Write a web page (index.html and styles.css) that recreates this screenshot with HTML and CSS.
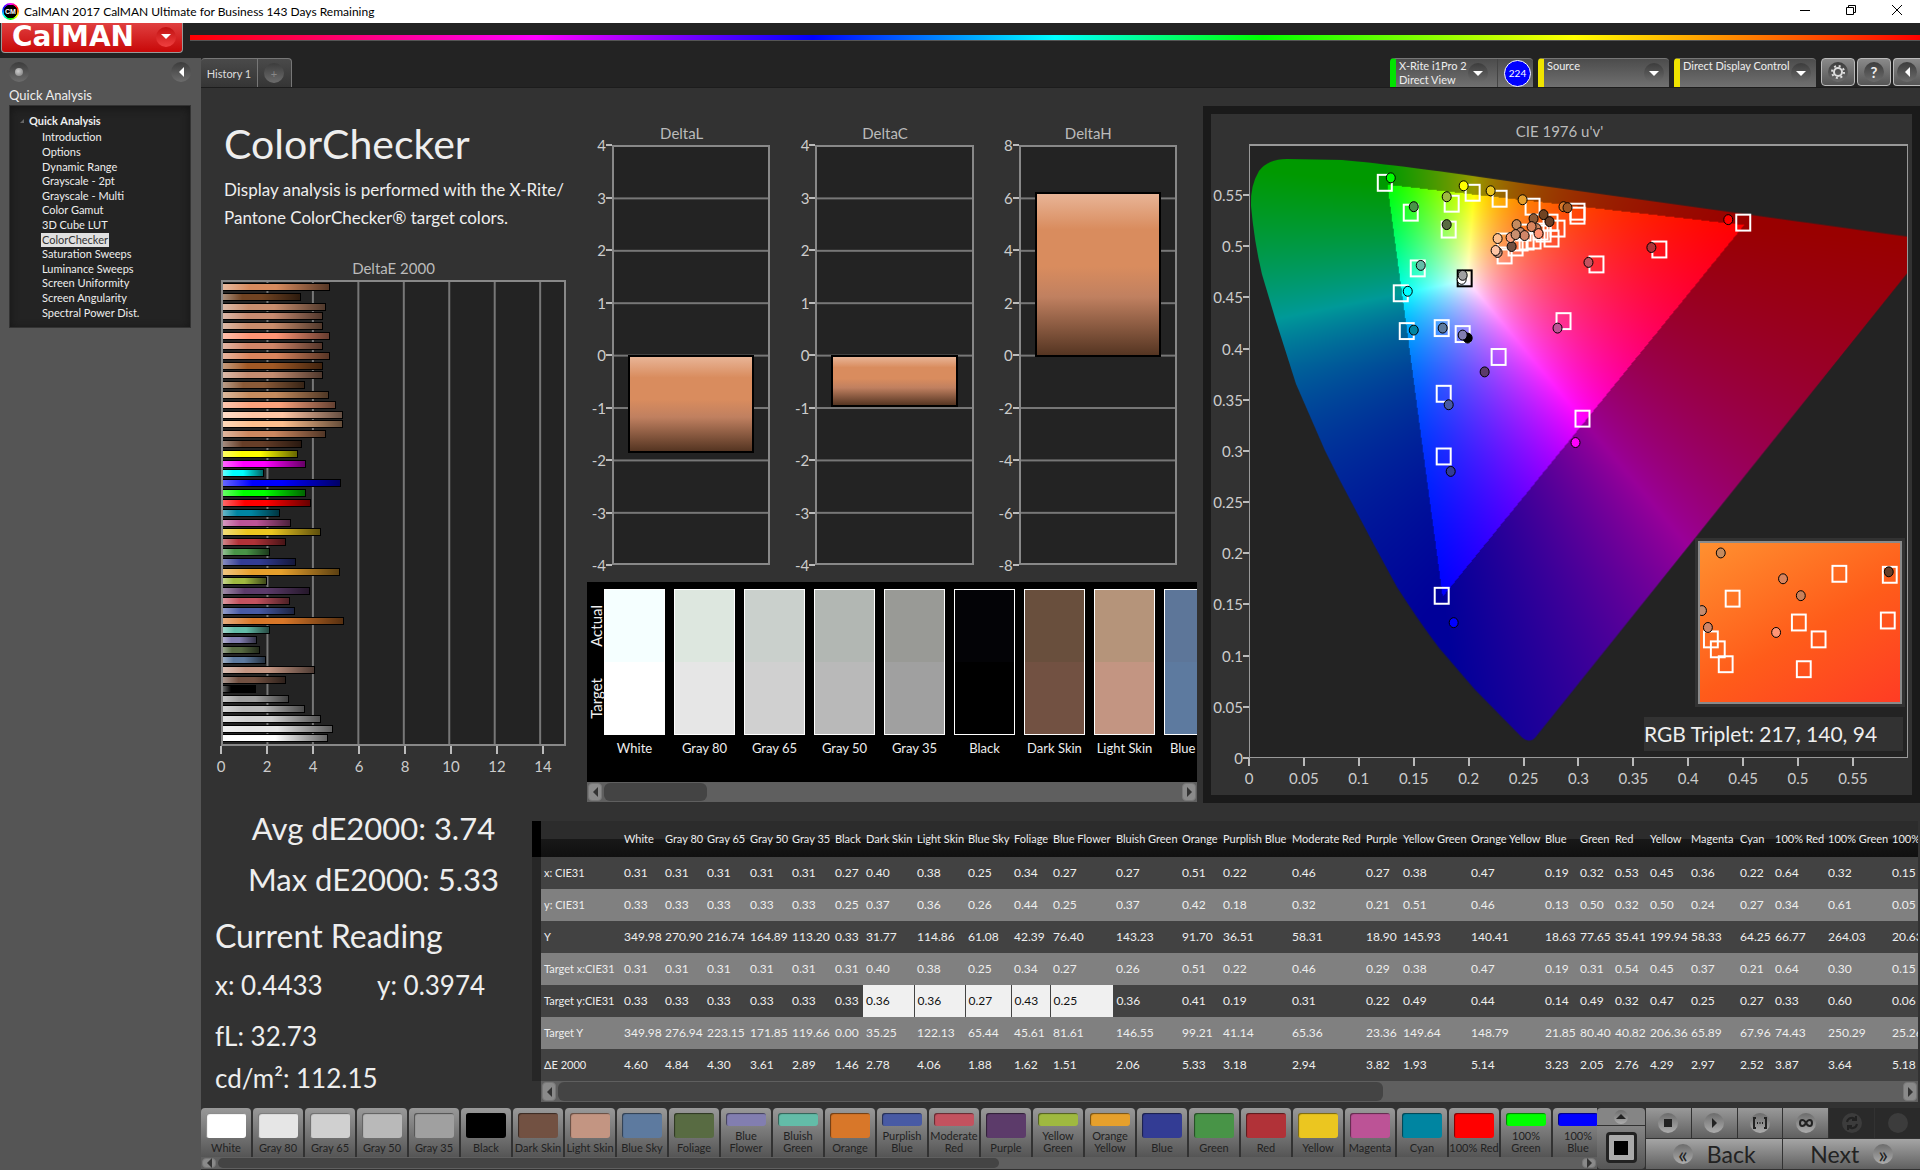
FILE: index.html
```html
<!DOCTYPE html>
<html lang="en">
<head>
  <meta charset="UTF-8">
  <meta name="viewport" content="width=device-width, initial-scale=1">
  <title>CalMAN 2017 CalMAN Ultimate for Business</title>
  <link rel="stylesheet" href="styles.css">
</head>
<body>

  <header class="titlebar">
    <span class="app-icon">CM</span>
    <span class="app-title">CalMAN 2017 CalMAN Ultimate for Business 143 Days Remaining</span>
    <div class="window-buttons">
      <button aria-label="Minimize"><svg width="12" height="12"><path d="M1 6.500h10" /></svg></button>
      <button aria-label="Restore"><svg width="12" height="12"><path d="M1.500 3.500h7v7h-7zM3.500 3.500v-2h7v7h-2" /></svg></button>
      <button aria-label="Close"><svg width="12" height="12"><path d="M1 1l10 10M11 1L1 11" /></svg></button>
    </div>
  </header>

  <div class="brand-row">
    <button class="logo">CalMAN <span class="round red"><i class="tri down"></i></span></button>
    <div class="spectrum"></div>
  </div>

  <div class="app">
    <aside class="sidebar">
      <div class="side-tools">
        <span class="round"><i class="dot"></i></span>
        <button class="round" aria-label="Collapse"><i class="tri left"></i></button>
      </div>
      <h2>Quick Analysis</h2>
      <nav class="tree">
        <h3>Quick Analysis</h3>
        <ul>
          <li><a href="#">Introduction</a></li>
          <li><a href="#">Options</a></li>
          <li><a href="#">Dynamic Range</a></li>
          <li><a href="#">Grayscale - 2pt</a></li>
          <li><a href="#">Grayscale - Multi</a></li>
          <li><a href="#">Color Gamut</a></li>
          <li><a href="#">3D Cube LUT</a></li>
          <li><a href="#" class="active">ColorChecker</a></li>
          <li><a href="#">Saturation Sweeps</a></li>
          <li><a href="#">Luminance Sweeps</a></li>
          <li><a href="#">Screen Uniformity</a></li>
          <li><a href="#">Screen Angularity</a></li>
          <li><a href="#">Spectral Power Dist.</a></li>
        </ul>
      </nav>
    </aside>

    <main>
      <div class="tabs">
        <button class="tab">History 1</button>
        <button class="tab add" aria-label="Add history"><span class="round">+</span></button>
        <div class="devices">
          <div class="device meter">
            <button class="device-main"><span>X-Rite i1Pro 2<br>Direct View</span><span class="round"><i class="tri down"></i></span></button>
            <span class="badge">224</span>
          </div>
          <div class="device source">
            <button class="device-main"><span>Source</span><span class="round"><i class="tri down"></i></span></button>
          </div>
          <div class="device display">
            <button class="device-main"><span>Direct Display Control</span><span class="round"><i class="tri down"></i></span></button>
          </div>
          <button class="tool" aria-label="Settings"><span class="round">
            <svg width="16" height="16" viewBox="0 0 16 16"><circle cx="8" cy="8" r="4" fill="none" stroke="#ddd" stroke-width="2" /><circle cx="8" cy="8" r="6" fill="none" stroke="#ddd" stroke-width="2" stroke-dasharray="2 2.710" /></svg>
          </span></button>
          <button class="tool" aria-label="Help"><span class="round">?</span></button>
          <button class="tool last" aria-label="Collapse"><span class="round"><i class="tri left"></i></span></button>
        </div>
      </div>

      <div class="upper">
        <section class="intro">
          <h1>ColorChecker</h1>
          <p>Display analysis is performed with the X-Rite/<br>Pantone ColorChecker® target colors.</p>
          <h4>DeltaE 2000</h4>
          <div class="de-plot" id="de-plot"></div>
          <ul class="x-axis de-axis" id="de-axis"></ul>
        </section>

        <section class="middle">
          <div class="deltas" id="deltas"></div>
          <div class="strip">
            <div class="strip-side"><span>Actual</span><span>Target</span></div>
            <div class="strip-list" id="strip"></div>
          </div>
          <div class="scroll strip-scroll"><button aria-label="Scroll left"><i class="tri left"></i></button><div class="thumb"></div><button aria-label="Scroll right"><i class="tri right"></i></button></div>
        </section>

        <section class="cie">
          <h4>CIE 1976 u'v'</h4>
          <div class="cie-grid">
            <ul class="y-axis" id="cie-y"></ul>
            <div class="cie-plot">
              <canvas id="gamut" width="658" height="614"></canvas>
              <svg id="cie-marks" class="marks" viewBox="0 0 658 614" preserveAspectRatio="none"></svg>
              <div class="inset"><svg id="inset-marks" class="marks" viewBox="0 0 202 160" preserveAspectRatio="none"></svg></div>
              <div class="triplet">RGB Triplet: 217, 140, 94</div>
            </div>
            <ul class="x-axis" id="cie-x"></ul>
          </div>
        </section>
      </div>

      <div class="lower">
        <section class="readings">
          <div class="summary">Avg dE2000: 3.74</div>
          <div class="summary">Max dE2000: 5.33</div>
          <div class="current">Current Reading</div>
          <div class="xy"><span>x: 0.4433</span><span>y: 0.3974</span></div>
          <div class="fl">fL: 32.73</div>
          <div class="cd">cd/m²: 112.15</div>
        </section>
        <section class="data">
          <div class="table-wrap"><table id="data-table"></table></div>
          <div class="scroll data-scroll"><button aria-label="Scroll left"><i class="tri left"></i></button><div class="thumb"></div><button aria-label="Scroll right"><i class="tri right"></i></button></div>
        </section>
      </div>

      <footer>
        <div class="patches">
          <div class="patch-list" id="patches"></div>
          <div class="scroll patch-scroll"><button aria-label="Scroll left"><i class="tri left"></i></button><div class="thumb"></div><button aria-label="Scroll right"><i class="tri right"></i></button></div>
        </div>
        <div class="window-pick">
          <button class="pick-up" aria-label="Expand"><span class="round light"><i class="tri up"></i></span></button>
          <button class="pick-size" aria-label="Window size"><span></span></button>
        </div>
        <div class="transport">
          <button aria-label="Stop"><span class="round light"><i class="stop"></i></span></button>
          <button aria-label="Play"><span class="round light"><i class="tri right"></i></span></button>
          <button aria-label="Read series"><span class="round light"><svg width="16" height="14"><path d="M4 2H2v10h2M12 2h2v10h-2M5 7h1M7.500 7h1M10 7h1" /></svg></span></button>
          <button aria-label="Read continuous"><span class="round light"><svg width="16" height="10"><path d="M8 5C6 1 2 1 2 5s4 4 6 0 6-4 6 0-4 4-6 0" /></svg></span></button>
          <button class="off" aria-label="Repeat"><span class="round"><svg width="16" height="16"><path d="M3 7a5 5 0 0 1 9-2M13 9a5 5 0 0 1-9 2M12 1v4H8M4 15v-4h4" /></svg></span></button>
          <button class="off" aria-label="Record"><span class="round"></span></button>
          <button class="step"><span class="round light">«</span>Back</button>
          <button class="step">Next<span class="round light">»</span></button>
        </div>
      </footer>
    </main>
  </div>

  <script src="script.js"></script>
</body>
</html>
```
FILE: styles.css
```css
* {
  box-sizing: border-box;
}

body {
  margin: 0;
  min-height: 100vh;
  display: flex;
  flex-direction: column;
  background: #232323;
  color: #eee;
  font-family: Lato, 'Open Sans', sans-serif;
  font-size: 14px;
  overflow-x: hidden;
}

h1, h2, h3, h4, p, ul {
  margin: 0;
  padding: 0;
  font-weight: normal;
}

ul {
  list-style: none;
}

button {
  font: inherit;
  color: inherit;
  border: 0;
  padding: 0;
  margin: 0;
  background: none;
  cursor: pointer;
}

/* small shared bits */
.round {
  width: 20px;
  height: 20px;
  border-radius: 50%;
  display: flex;
  align-items: center;
  justify-content: center;
  flex: none;
  background: linear-gradient(#3c3c3c, #6c6c6c);
}

.round.light {
  background: linear-gradient(#6c6c6c, #adadad);
}

.round.red {
  background: linear-gradient(#c01010, #f04040);
}

.tri {
  border: 5px solid transparent;
  flex: none;
}

.tri.down {
  border-top-color: #fff;
  border-bottom-width: 0;
}

.tri.up {
  border-bottom-color: #222;
  border-top-width: 0;
}

.tri.left {
  border-right-color: #fff;
  border-left-width: 0;
}

.tri.right {
  border-left-color: #222;
  border-right-width: 0;
}

.dot {
  width: 8px;
  height: 8px;
  border-radius: 50%;
  background: radial-gradient(circle at 40% 40%, #ccc, #777);
}

/* title bar */
.titlebar {
  display: flex;
  align-items: center;
  height: 23px;
  background: #fff;
  color: #000;
  font: 12px Lato, 'Open Sans', sans-serif;
}

.app-icon {
  width: 17px;
  height: 17px;
  margin: 0 5px 0 2px;
  border-radius: 50%;
  background: radial-gradient(#000 55%, transparent 58%), conic-gradient(#f0f, #f00, #ff0, #0f0, #0ff, #00f, #f0f);
  color: #fff;
  font: bold 7px/17px 'Liberation Sans', sans-serif;
  text-align: center;
}

.window-buttons {
  margin-left: auto;
  display: flex;
}

.window-buttons button {
  width: 46px;
  height: 20px;
}

.window-buttons svg {
  fill: none;
  stroke: #000;
}

.brand-row {
  display: flex;
  height: 35px;
}

.logo {
  width: 182px;
  height: 30px;
  margin: 0 7px 0 1px;
  display: flex;
  align-items: center;
  justify-content: space-between;
  padding: 0 6px 2px 10px;
  border: 1px solid #999;
  border-top: 0;
  border-radius: 0 0 4px 4px;
  background: linear-gradient(#e04040, #c80808);
  color: #fff;
  font: bold 28px/28px 'DejaVu Sans', sans-serif;
}

.spectrum {
  flex: 1;
  height: 6px;
  margin-top: 12px;
  border-bottom: 1px solid #555;
  background: linear-gradient(90deg, #f00, #f0f 20%, #00f 36%, #0ff 50%, #0f0 62%, #ff0 80%, #f00);
}

.app {
  flex: 1;
  display: flex;
}

/* sidebar */
.sidebar {
  width: 201px;
  flex: none;
  padding: 4px 10px 0 9px;
  background: #555;
}

.side-tools {
  display: flex;
  justify-content: space-between;
}

.sidebar h2 {
  font-size: 13px;
  line-height: 20px;
  margin: 3px 0 0;
}

.tree {
  padding: 8px 0 7px;
  border: 1px solid #333;
  background: #232323;
  box-shadow: inset 0 2px 8px #151515;
  font-size: 11px;
}

.tree h3 {
  font-size: 11px;
  font-weight: bold;
  line-height: 14px;
  padding-left: 19px;
  margin-bottom: 2px;
}

.tree h3::before {
  content: '';
  float: left;
  margin: 5px 0 0 -9px;
  border: 2px solid;
  border-color: transparent #666 #666 transparent;
}

.tree ul {
  display: grid;
  grid-auto-rows: 1fr;
  height: 190px;
  padding-left: 31px;
}

.tree li {
  display: flex;
  align-items: center;
}

.tree a {
  color: #eee;
  text-decoration: none;
  line-height: 14px;
  padding: 0 1px;
}

.tree a.active {
  background: #e0e0e0;
  color: #333;
}

/* tabs and devices */
main {
  flex: 1;
  min-width: 0;
  display: flex;
  flex-direction: column;
  background: #323232;
}

.tabs {
  display: flex;
  height: 30px;
  background: #232323;
  border-bottom: 1px solid #1c1c1c;
}

.tab {
  width: 57px;
  border: 1px solid #777;
  border-width: 1px 1px 0 0;
  border-top-left-radius: 4px;
  background: linear-gradient(#4a4a4a, #353535);
  color: #ddd;
  font-size: 11px;
}

.tab.add {
  width: 34px;
  border-radius: 0 4px 0 0;
  padding-left: 6px;
  color: #888;
}

.devices {
  margin-left: auto;
  display: flex;
  gap: 5px;
}

.device {
  display: flex;
  border-left: 6px solid #f0e400;
  border-top: 1px solid #777;
  border-radius: 4px 4px 0 0;
  background: linear-gradient(#4c4c4c, #707070);
  font-size: 11px;
}

.device.meter {
  border-left-color: #00e400;
  width: 143px;
}

.device.source {
  width: 131px;
}

.device.display {
  width: 142px;
}

.device-main {
  flex: 1;
  display: flex;
  justify-content: space-between;
  padding: 0 5px 0 3px;
  text-align: left;
  line-height: 14px;
  white-space: nowrap;
}

.device-main .round {
  margin-top: 4px;
}

.meter .device-main {
  padding-right: 9px;
  border-right: 1px solid #444;
}

.badge {
  width: 27px;
  height: 27px;
  margin: 1px 2px 0 6px;
  border: 1px solid #fff;
  border-radius: 50%;
  background: #00f;
  color: #fff;
  font-size: 10px;
  line-height: 25px;
  text-align: center;
}

.tool {
  width: 34px;
  height: 28px;
  display: flex;
  align-items: center;
  justify-content: center;
  border: 1px solid #bbb;
  border-radius: 4px;
  background: linear-gradient(#8a8a8a, #555);
  margin-right: -3px;
  font-weight: bold;
  font-size: 15px;
}

.tool.last {
  width: 27px;
  border-right: 0;
  border-radius: 4px 0 0 4px;
  margin-right: 0;
}

/* charts */
.upper {
  display: grid;
  grid-template-columns: minmax(0, 379fr) minmax(0, 623fr) minmax(0, 717fr);
}

.upper h4 {
  color: #bbb;
  font-size: 15px;
  line-height: 20px;
  text-align: center;
}

.x-axis, .y-axis {
  display: flex;
  justify-content: space-between;
  color: #ccc;
  font-size: 15px;
}

.x-axis li {
  width: 0;
  display: flex;
  flex-direction: column;
  align-items: center;
}

.x-axis li::before {
  content: '';
  width: 2px;
  height: 8px;
  flex: none;
  background: #bbb;
  margin-bottom: 3px;
}

.y-axis {
  flex-direction: column;
  align-items: flex-end;
}

.y-axis li {
  height: 0;
  display: flex;
  align-items: center;
}

.y-axis li::after {
  content: '';
  width: 6px;
  height: 2px;
  background: #bbb;
}

.y-axis li.blank::after, .x-axis li.blank::before {
  background: none;
}

.intro {
  padding: 24px 14px 0 20px;
}

.intro h1 {
  font-size: 41px;
  line-height: 64px;
  padding-left: 3px;
}

.intro p {
  font-size: 17px;
  line-height: 28px;
  padding-left: 3px;
  margin-bottom: 26px;
  white-space: nowrap;
}

.intro h4 {
  margin-bottom: 2px;
}

.de-plot {
  height: 466px;
  display: flex;
  flex-direction: column;
  padding-top: 1px;
  border: 2px solid #888;
  background: linear-gradient(90deg, #777 2px, transparent 2px) -2px 0 / 13.333% 100% #232323;
}

.de-row {
  flex: 1;
}

.de-bar {
  height: 8px;
  border: 1px solid #000;
  border-left: 0;
  background-image: linear-gradient(90deg, rgba(255, 255, 255, 0.4), rgba(255, 255, 255, 0) 25%, rgba(0, 0, 0, 0) 50%, rgba(0, 0, 0, 0.6));
}

.de-axis {
  margin-right: -23px;
}

.de-axis li.blank {
  visibility: hidden;
}

.middle {
  padding: 35px 6px 0 7px;
}

.deltas {
  display: grid;
  grid-template-columns: repeat(3, 1fr);
  gap: 20px;
  padding: 0 20px 17px 0;
}

.delta {
  display: grid;
  grid-template-columns: 25px 1fr;
}

.delta h4 {
  grid-column: 1 / 3;
  margin: 0 0 2px 6px;
}

.delta-plot {
  height: 420px;
  border: 2px solid #888;
  background: linear-gradient(#777 2px, transparent 2px) 0 -2px / 100% 12.600% #232323;
  padding: 0 14px;
}

.delta-bar {
  border: 2px solid #000;
  background: linear-gradient(#e8b496, #d98c5e 22%, #d98c5e 45%, #c08060 64%, #553522);
}

.strip {
  display: flex;
  height: 200px;
  padding-top: 7px;
  background: #000;
  overflow: hidden;
}

.strip-side {
  width: 17px;
  height: 146px;
  flex: none;
  display: flex;
  flex-direction: column;
  justify-content: space-around;
  align-items: center;
}

.strip-side span {
  writing-mode: vertical-rl;
  rotate: 180deg;
  font-size: 15px;
}

.strip-list {
  display: flex;
  gap: 9px;
  overflow: hidden;
}

.swatch {
  width: 61px;
  flex: none;
  font-size: 13px;
  text-align: center;
  white-space: nowrap;
}

.swatch-box {
  height: 146px;
  margin-bottom: 5px;
  border: 1px solid #fff;
}

.swatch-box div {
  height: 50%;
}

/* scroll bars */
.scroll {
  display: flex;
  align-items: stretch;
  padding: 1px;
  gap: 2px;
  background: #5f5f5f;
}

.scroll button {
  width: 14px;
  display: flex;
  align-items: center;
  justify-content: center;
  border: 1px solid #777;
  border-radius: 4px;
  background: #8a8a8a;
}

.scroll .tri.left {
  border-right-color: #333;
}

.scroll .tri.right {
  border-left-color: #333;
}

.scroll button:last-child {
  margin-left: auto;
}

.thumb {
  border-radius: 6px;
  background: #444;
}

.strip-scroll {
  height: 20px;
}

.strip-scroll .thumb {
  width: 17%;
}

.data-scroll {
  height: 21px;
}

.data-scroll .thumb {
  width: 60%;
}

.patch-scroll {
  height: 12px;
}

.patch-scroll .thumb {
  width: 56%;
}

/* CIE diagram */
.cie {
  margin-top: 18px;
  height: 697px;
  border: 8px solid #1a1a1a;
  padding: 7px 4px 0 0;
}

.cie h4 {
  margin-bottom: 3px;
}

.cie-grid {
  display: grid;
  grid-template-columns: 38px 1fr;
}

.cie-grid .x-axis {
  grid-column: 2;
}

.cie-plot {
  position: relative;
  height: 614px;
  border: 1px solid #999;
  border-top-width: 2px;
  background: #232323;
}

.cie-plot canvas, .marks {
  position: absolute;
  inset: 0;
  width: 100%;
  height: 100%;
}

.marks rect {
  fill: none;
  stroke: #fff;
  stroke-width: 2;
}

.marks rect.white-point {
  stroke: #000;
}

.marks ellipse {
  stroke: #000;
}

.inset {
  position: absolute;
  right: 5px;
  bottom: 53px;
  width: 31%;
  height: 163px;
  border: 2px solid #8a8a8a;
  outline: 3px solid #323232;
  background: linear-gradient(150deg, #ff9030, #ff5c1a 55%, #ff3c24);
}

.triplet {
  position: absolute;
  right: 4px;
  bottom: 6px;
  width: 259px;
  background: #323232;
  font-size: 21px;
  line-height: 34px;
  white-space: nowrap;
}

/* readings and table */
.lower {
  flex: 1;
  display: grid;
  grid-template-columns: 331px minmax(0, 1fr);
}

.readings {
  padding-left: 14px;
}

.summary {
  font-size: 31px;
  line-height: 51px;
  text-align: center;
}

.current {
  font-size: 32px;
  line-height: 62px;
}

.xy {
  display: grid;
  grid-template-columns: 162px 1fr;
  font-size: 26px;
  line-height: 36px;
  padding-bottom: 12px;
}

.fl, .cd {
  font-size: 26px;
  line-height: 42px;
}

.data {
  margin: 18px 2px 0 0;
}

.table-wrap {
  overflow: hidden;
  padding-left: 9px;
  background: linear-gradient(#000 36px, #262626 36px);
}

table {
  table-layout: fixed;
  width: 0;
  border-collapse: collapse;
  font-size: 12px;
  line-height: 16px;
}

th, td {
  height: 32px;
  padding: 0 0 0 3px;
  text-align: left;
  font-weight: normal;
  white-space: nowrap;
}

th {
  font-size: 11px;
}

thead th {
  height: 36px;
  background: linear-gradient(#2c2c2c 50%, #181818 50%, #101010);
}

tbody tr {
  background: #424242;
}

tbody tr:nth-child(even) {
  background: #808080;
}

td.edit {
  background: #f0f0f0;
  color: #111;
  border-right: 1px solid #444;
}

.data-scroll {
  margin-left: 9px;
}

/* footer */
footer {
  display: flex;
  height: 62px;
  padding-bottom: 1px;
}

.patches {
  flex: 1;
  min-width: 0;
}

.patch-list {
  display: flex;
  gap: 2px;
  overflow: hidden;
  height: 49px;
}

.patch {
  width: 50px;
  flex: none;
  display: flex;
  flex-direction: column;
  align-items: center;
  justify-content: space-between;
  padding: 5px 0 3px;
  border-radius: 4px 4px 0 0;
  background: linear-gradient(#999, #555);
  color: #222;
  font-size: 11px;
  line-height: 12px;
  white-space: pre;
}

.patch i {
  width: 40px;
  flex: 1;
  margin-bottom: 4px;
  border-radius: 3px;
  box-shadow: inset 1px 1px 1px rgba(0, 0, 0, 0.5);
}

.window-pick {
  width: 49px;
  display: flex;
  flex-direction: column;
  gap: 1px;
  padding-right: 1px;
}

.pick-up, .pick-size {
  display: flex;
  align-items: center;
  justify-content: center;
  border-radius: 4px 4px 0 0;
  background: #858585;
}

.pick-up {
  height: 17px;
}

.pick-up .round {
  width: 14px;
  height: 14px;
}

.pick-size {
  flex: 1;
  border-radius: 0 0 4px 4px;
  background: linear-gradient(#858585, #555);
}

.pick-size span {
  width: 31px;
  height: 31px;
  border: 3px solid #222;
  border-radius: 4px;
  background: linear-gradient(#000, #000) center / 14px 14px no-repeat #aaa;
}

.transport {
  width: 274px;
  display: grid;
  grid-template-columns: repeat(6, 1fr);
  grid-template-rows: 30px 30px;
  gap: 1px;
}

.transport button {
  display: flex;
  align-items: center;
  justify-content: center;
  background: linear-gradient(#999, #606060);
  color: #222;
}

.transport button.off {
  background: #2a2a2a;
}

.transport .off .round {
  background: #3c3c3c;
}

.transport svg {
  fill: none;
  stroke: #222;
  stroke-width: 2;
}

.transport .step {
  grid-column: span 3;
  gap: 14px;
  font-size: 23px;
  background: linear-gradient(#a5a5a5, #606060);
}

.stop {
  width: 8px;
  height: 8px;
  background: #222;
}
```
FILE: script.js
```js
const colors = ["White", "Gray 80", "Gray 65", "Gray 50", "Gray 35", "Black", "Dark Skin", "Light Skin", "Blue Sky",
  "Foliage", "Blue Flower", "Bluish Green", "Orange", "Purplish Blue", "Moderate Red", "Purple", "Yellow Green",
  "Orange Yellow", "Blue", "Green", "Red", "Yellow", "Magenta", "Cyan", "100% Red", "100% Green", "100% Blue"];

const targets = ["#ffffff", "#e6e6e6", "#d0d0d0", "#b9b9b9", "#a0a0a0", "#000000", "#725142", "#c39582", "#5d7a9f",
  "#586b42", "#827eb0", "#63bca8", "#d87729", "#485aa4", "#c3525f", "#5c3b6a", "#9fb940", "#e6a02c", "#333c94",
  "#489447", "#b13238", "#ebc620", "#bc5396", "#0085a1", "#ff0000", "#00ff00", "#0000ff"];

const actuals = ["#f5ffff", "#dde7df", "#cad0cc", "#b2b7b3", "#999a96", "#030306", "#694f3d", "#b5947a", "#5d7699"];

const colWidths = [80, 41, 42, 43, 42, 43, 31, 51, 51, 46, 39, 63, 66, 41, 69, 74, 37, 68, 74, 35, 35, 35, 41, 49, 35, 53, 64, 65];

const rows = {
  "x: CIE31": "0.31 0.31 0.31 0.31 0.31 0.27 0.40 0.38 0.25 0.34 0.27 0.27 0.51 0.22 0.46 0.27 0.38 0.47 0.19 0.32 0.53 0.45 0.36 0.22 0.64 0.32 0.15",
  "y: CIE31": "0.33 0.33 0.33 0.33 0.33 0.25 0.37 0.36 0.26 0.44 0.25 0.37 0.42 0.18 0.32 0.21 0.51 0.46 0.13 0.50 0.32 0.50 0.24 0.27 0.34 0.61 0.05",
  "Y": "349.98 270.90 216.74 164.89 113.20 0.33 31.77 114.86 61.08 42.39 76.40 143.23 91.70 36.51 58.31 18.90 145.93 140.41 18.63 77.65 35.41 199.94 58.33 64.25 66.77 264.03 20.63",
  "Target x:CIE31": "0.31 0.31 0.31 0.31 0.31 0.31 0.40 0.38 0.25 0.34 0.27 0.26 0.51 0.22 0.46 0.29 0.38 0.47 0.19 0.31 0.54 0.45 0.37 0.21 0.64 0.30 0.15",
  "Target y:CIE31": "0.33 0.33 0.33 0.33 0.33 0.33 0.36 0.36 0.27 0.43 0.25 0.36 0.41 0.19 0.31 0.22 0.49 0.44 0.14 0.49 0.32 0.47 0.25 0.27 0.33 0.60 0.06",
  "Target Y": "349.98 276.94 223.15 171.85 119.66 0.00 35.25 122.13 65.44 45.61 81.61 146.55 99.21 41.14 65.36 23.36 149.64 148.79 21.85 80.40 40.82 206.36 65.89 67.96 74.43 250.29 25.26",
  "ΔE 2000": "4.60 4.84 4.30 3.61 2.89 1.46 2.78 4.06 1.88 1.62 1.51 2.06 5.33 3.18 2.94 3.82 1.93 5.14 3.23 2.05 2.76 4.29 2.97 2.52 3.87 3.64 5.18"
};

// skin tones and 100% cyan / magenta / yellow, top of the DeltaE chart
const extraBars = [
  [4.71, "#d88b5e"], [3.45, "#704322"], [4.54, "#c98e6e"], [4.41, "#c78a70"], [4.41, "#c98c6c"], [4.71, "#ff9575"],
  [4.41, "#d08568"], [4.71, "#d9845d"], [4.41, "#a05825"], [4.41, "#c48c70"], [3.62, "#8a5a38"], [4.67, "#c58b5e"],
  [4.97, "#fba27c"], [5.28, "#ffc6a5"], [5.28, "#fec08e"], [4.54, "#cc8860"], [3.49, "#663e28"], [3.32, "#ffff00"],
  [3.67, "#ff00ff"], [1.8, "#00ffff"]
];

function el(id) {
  return document.getElementById(id);
}

// DeltaE 2000 bars
const de = rows["ΔE 2000"].split(" ");
const bars = extraBars.concat(colors.map((c, i) => [de[i], targets[i]]).reverse());
el("de-plot").innerHTML = bars.map(b =>
  `<div class="de-row"><div class="de-bar" style="width:${b[0] / 15 * 100}%;background-color:${b[1]}"></div></div>`).join("");
el("de-axis").innerHTML = [0, 2, 4, 6, 8, 10, 12, 14, 16].map(n => `<li class="${n > 14 ? "blank" : ""}">${n}</li>`).join("");

// DeltaL / DeltaC / DeltaH
const deltas = [["DeltaL", 4, -1.85], ["DeltaC", 4, -0.97], ["DeltaH", 8, 6.28]];
el("deltas").innerHTML = deltas.map(([name, max, value]) => {
  let labels = "";
  for (let i = 4; i >= -4; i--) labels += `<li>${i * max / 4}</li>`;
  const top = value > 0 ? (1 - value / max) * 208 : 208;
  const height = Math.abs(value) / max * 208 + 2;
  return `<div class="delta"><h4>${name}</h4><ul class="y-axis">${labels}</ul>
    <div class="delta-plot"><div style="height:${Math.round(top)}px"></div><div class="delta-bar" style="height:${Math.round(height)}px"></div></div></div>`;
}).join("");

// actual / target strip
el("strip").innerHTML = actuals.map((a, i) =>
  `<div class="swatch"><div class="swatch-box"><div style="background:${a}"></div><div style="background:${targets[i]}"></div></div>${colors[i]}</div>`).join("");

// CIE axes
let yLabels = "", xLabels = "";
for (let i = 12; i >= 0; i--) yLabels += i === 12 ? `<li class="blank"></li>` : `<li>${i * 5 / 100}</li>`;
for (let i = 0; i <= 12; i++) xLabels += i === 12 ? `<li class="blank"></li>` : `<li>${i * 5 / 100}</li>`;
el("cie-y").innerHTML = yLabels;
el("cie-x").innerHTML = xLabels;

// gamut fill, dimmed outside Rec.709
const canvas = el("gamut");
const ctx = canvas.getContext("2d");
const W = canvas.width, H = canvas.height;
const img = ctx.createImageData(W, H);
for (let py = 0; py < H; py++) {
  for (let px = 0; px < W; px++) {
    const u = px / W * 0.6, v = (H - py) / H * 0.6;
    const d = 6 * u - 16 * v + 12;
    const x = 9 * u / d, y = 4 * v / d, z = 1 - x - y;
    let rgb = [
      3.2406 * x - 1.5372 * y - 0.4986 * z,
      -0.9689 * x + 1.8758 * y + 0.0415 * z,
      0.0557 * x - 0.204 * y + 1.057 * z
    ];
    const dim = Math.min(...rgb) < 0 ? 0.6 : 1;
    const max = Math.max(...rgb);
    rgb = rgb.map(c => Math.max(c, 0) / max * 255 * dim);
    img.data.set([rgb[0], rgb[1], rgb[2], 255], (py * W + px) * 4);
  }
}
ctx.putImageData(img, 0, 0);
ctx.globalCompositeOperation = "destination-in";
ctx.fill(new Path2D("M37 13 L92 14 Q150 19 271 37 L658 91 V128 L286 594 Q280 601 272 594 L225 546 L189 504 Q168 476 147 443 L120 393 L90 336 L75 306 L46 239 L26 176 L12 129 Q4 95 1 60 Q0 40 9 25 Q18 13 37 13Z"));

// targets are squares, measurements are dots
function marks(rects, dots) {
  return rects.map(([x, y, c]) => `<rect x="${x - 7}" y="${y - 8}" width="14" height="16" class="${c || ""}"/>`).join("") +
    dots.map(([x, y, c]) => `<ellipse cx="${x}" cy="${y}" rx="4.500" ry="5" fill="${c}"/>`).join("");
}

el("cie-marks").innerHTML = marks(
  [[135, 37], [223, 47], [202, 58], [250, 53], [283, 61], [328, 66], [328, 70], [161, 67], [199, 84], [168, 123],
   [151, 148], [157, 186], [192, 183], [213, 189], [249, 212], [194, 249], [194, 312], [333, 274], [314, 176],
   [347, 119], [410, 104], [494, 77], [192, 452], [301, 77], [308, 83], [302, 93], [291, 86], [284, 95], [277, 96],
   [271, 97], [266, 102], [255, 110], [255, 96], [274, 87], [294, 88], [215, 133, "white-point"]],
  [[141, 32, "#0f0"], [214, 40, "#ff0"], [241, 45, "#ebc620"], [197, 51, "#9fb940"], [273, 54, "#e6a02c"],
   [164, 61, "#489447"], [197, 79, "#586b42"], [314, 61, "#d87729"], [318, 62, "#a05825"], [294, 69, "#704322"],
   [284, 73, "#8a5a38"], [300, 76, "#663e28"], [267, 79, "#c58b5e"], [287, 83, "#c8805a"], [282, 81, "#d9845d"],
   [289, 88, "#ff9575"], [271, 87, "#c48c70"], [275, 90, "#d08568"], [248, 93, "#fec08e"], [262, 101, "#725142"], [261, 92, "#fba27c"],
   [266, 89, "#c98e6e"], [248, 107, "#c39582"], [246, 105, "#ffc6a5"], [479, 74, "#f00"], [402, 102, "#b13238"],
   [339, 117, "#c3525f"], [171, 120, "#63bca8"], [158, 146, "#0ff"], [164, 185, "#0085a1"], [193, 183, "#5d7a9f"],
   [218, 193, "#000"], [213, 190, "#827eb0"], [308, 183, "#bc5396"], [235, 227, "#5c3b6a"], [199, 260, "#485aa4"],
   [201, 327, "#333c94"], [326, 298, "#f0f"], [204, 479, "#00f"], [212, 134, "#fff"], [213, 130, "#a0a0a0"]]);

el("inset-marks").innerHTML = marks(
  [[141, 31], [192, 32], [33, 56], [100, 80], [190, 78], [120, 97], [11, 97], [18, 107], [26, 122], [105, 127]],
  [[21, 10, "#c58b5e"], [84, 36, "#d9845d"], [102, 53, "#c8805a"], [191, 29, "#663e28"], [2, 68, "#c48c70"],
   [8, 85, "#d08568"], [77, 90, "#ff9575"]]);

// data table
const edited = [6, 7, 8, 9, 10];
el("data-table").innerHTML =
  `<colgroup>${colWidths.map(w => `<col style="width:${w}px">`).join("")}</colgroup>
  <thead><tr><th></th>${colors.map(c => `<th scope="col">${c}</th>`).join("")}</tr></thead>
  <tbody>${Object.keys(rows).map(name => `<tr><th scope="row">${name}</th>${rows[name].split(" ").map((v, i) =>
    `<td class="${name === "Target y:CIE31" && edited.includes(i) ? "edit" : ""}">${v}</td>`).join("")}</tr>`).join("")}</tbody>`;

// patch buttons, the longer names go over two lines
const twoLines = ["Blue Flower", "Bluish Green", "Purplish Blue", "Moderate Red", "Yellow Green", "Orange Yellow", "100% Green", "100% Blue"];
el("patches").innerHTML = colors.map((c, i) =>
  `<button class="patch"><i style="background:${targets[i]}"></i>${twoLines.includes(c) ? c.replace(" ", "\n") : c}</button>`).join("");
```
